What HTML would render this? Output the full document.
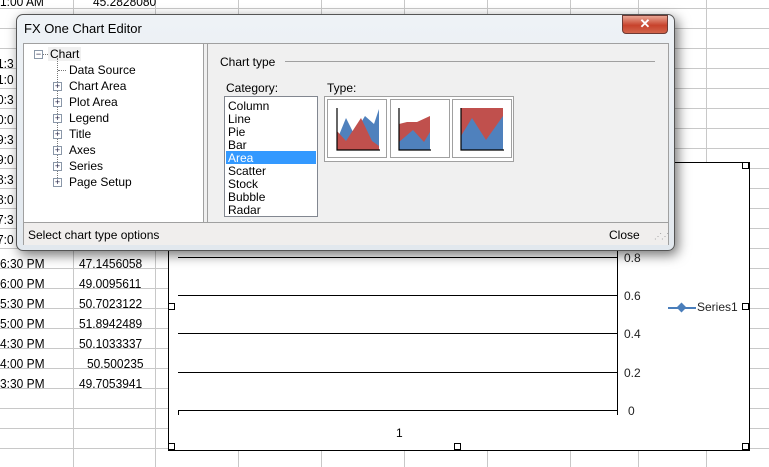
<!DOCTYPE html>
<html><head><style>
*{margin:0;padding:0;box-sizing:border-box}
body{width:769px;height:467px;overflow:hidden;background:#fff;font-family:"Liberation Sans",sans-serif;font-size:12px;color:#000;position:relative}
.a{position:absolute}
.vl{position:absolute;top:0;height:467px;width:1px;background:#c8c8c8}
.hl{position:absolute;left:0;width:769px;height:1px;background:#c8c8c8}
.cell{position:absolute;font-size:13px;white-space:nowrap;transform:scaleX(.92);transform-origin:left}
.g{position:absolute;left:178px;width:440px;height:1px;background:#000}
.yl{position:absolute;left:624px;font-size:12px;color:#222}
.h{position:absolute;width:7px;height:7px;border:1px solid #000;background:#fff}
.ti{position:absolute;font-size:12px;white-space:nowrap}
.pl{position:absolute;width:9px;height:9px;border:1px solid #8a97a8;background:#fff;font-size:9px;line-height:6px;text-align:center;color:#224}
.li{position:absolute;left:3px;font-size:12px;line-height:13px}
</style></head><body>
<div class="vl" style="left:73px"></div><div class="vl" style="left:155px"></div><div class="vl" style="left:238px"></div><div class="vl" style="left:321px"></div><div class="vl" style="left:404px"></div><div class="vl" style="left:487px"></div><div class="vl" style="left:570px"></div><div class="vl" style="left:638px"></div><div class="vl" style="left:706px"></div>
<div class="hl" style="top:8px"></div><div class="hl" style="top:28px"></div><div class="hl" style="top:48px"></div><div class="hl" style="top:68px"></div><div class="hl" style="top:88px"></div><div class="hl" style="top:108px"></div><div class="hl" style="top:128px"></div><div class="hl" style="top:148px"></div><div class="hl" style="top:168px"></div><div class="hl" style="top:188px"></div><div class="hl" style="top:208px"></div><div class="hl" style="top:228px"></div><div class="hl" style="top:248px"></div><div class="hl" style="top:268px"></div><div class="hl" style="top:288px"></div><div class="hl" style="top:308px"></div><div class="hl" style="top:328px"></div><div class="hl" style="top:348px"></div><div class="hl" style="top:368px"></div><div class="hl" style="top:388px"></div><div class="hl" style="top:408px"></div><div class="hl" style="top:428px"></div><div class="hl" style="top:448px"></div>
<div class="cell" style="left:0;top:-6px">1:00 AM</div><div class="cell" style="left:93px;top:-6px">45.2828080</div>
<div class="cell" style="left:0;top:256px">6:30 PM</div><div class="cell" style="left:79px;top:256px">47.1456058</div>
<div class="cell" style="left:0;top:276px">6:00 PM</div><div class="cell" style="left:79px;top:276px">49.0095611</div>
<div class="cell" style="left:0;top:296px">5:30 PM</div><div class="cell" style="left:79px;top:296px">50.7023122</div>
<div class="cell" style="left:0;top:316px">5:00 PM</div><div class="cell" style="left:79px;top:316px">51.8942489</div>
<div class="cell" style="left:0;top:336px">4:30 PM</div><div class="cell" style="left:79px;top:336px">50.1033337</div>
<div class="cell" style="left:0;top:356px">4:00 PM</div><div class="cell" style="left:87px;top:356px">50.500235</div>
<div class="cell" style="left:0;top:376px">3:30 PM</div><div class="cell" style="left:79px;top:376px">49.7053941</div>
<div class="cell" style="left:-3px;top:56px">1:3</div><div class="cell" style="left:-3px;top:72px">1:0</div><div class="cell" style="left:-3px;top:92px">0:3</div><div class="cell" style="left:-3px;top:112px">0:0</div><div class="cell" style="left:-3px;top:132px">9:3</div><div class="cell" style="left:-3px;top:152px">9:0</div><div class="cell" style="left:-3px;top:172px">8:3</div><div class="cell" style="left:-3px;top:192px">8:0</div><div class="cell" style="left:-3px;top:212px">7:3</div><div class="cell" style="left:-3px;top:232px">7:0</div>
<div class="a" style="left:168px;top:162px;width:582px;height:289px;background:#fff;border:1px solid #000"></div>
<div class="g" style="top:257px"></div><div class="g" style="top:295px"></div><div class="g" style="top:333px"></div><div class="g" style="top:372px"></div><div class="g" style="top:410px"></div>
<div class="a" style="left:178px;top:410px;width:1px;height:5px;background:#000"></div>
<div class="a" style="left:617px;top:250px;width:1px;height:165px;background:#000"></div>
<div class="yl" style="top:251px">0.8</div><div class="yl" style="top:289px">0.6</div><div class="yl" style="top:327px">0.4</div><div class="yl" style="top:366px">0.2</div><div class="yl" style="top:404px;left:628px">0</div>
<div class="a" style="left:396px;top:426px;font-size:12px">1</div>
<div class="a" style="left:668px;top:307px;width:28px;height:2px;background:#4a7ebb"></div>
<div class="a" style="left:678px;top:304px;width:7px;height:7px;background:#4a7ebb;transform:rotate(45deg)"></div>
<div class="a" style="left:697px;top:300px;font-size:12px;color:#222">Series1</div>
<div class="h" style="left:168px;top:303px"></div><div class="h" style="left:742px;top:303px"></div>
<div class="h" style="left:168px;top:443px"></div><div class="h" style="left:454px;top:443px"></div><div class="h" style="left:742px;top:443px"></div><div class="h" style="left:742px;top:162px"></div>
<div class="a" style="left:16px;top:14px;width:659px;height:237px;border:1px solid #555;border-radius:7px;background:linear-gradient(#eef2f6,#e2e8ee);box-shadow:3px 4px 12px rgba(0,0,0,.55)"></div>
<div class="a" style="left:24px;top:21px;font-size:13px">FX One Chart Editor</div>
<div class="a" style="left:622px;top:15px;width:46px;height:19px;border:1px solid #6d3a34;border-radius:0 0 4px 4px;background:linear-gradient(#e9a593,#c7432c 55%,#d2644b);color:#fff;font-weight:bold;text-align:center;font-size:13px;line-height:16px">✕</div>
<div class="a" style="left:23px;top:43px;width:646px;height:202px;border:1px solid #a0a0a0;background:#f0f0f0"></div>
<div class="a" style="left:24px;top:44px;width:180px;height:178px;background:#fff;border-right:1px solid #a0a0a0"></div>
<div class="a" style="left:204px;top:44px;width:4px;height:178px;background:#f0f0f0;border-right:1px solid #a0a0a0"></div>
<div class="a" style="left:24px;top:222px;width:645px;height:1px;background:#a0a0a0"></div>
<div class="a" style="left:24px;top:223px;width:644px;height:22px;background:#f0eeed"></div>
<div class="a" style="left:28px;top:228px;font-size:12px">Select chart type options</div>
<div class="a" style="left:609px;top:228px;font-size:12px">Close</div>
<div class="a" style="left:654px;top:232px;font-size:8px;color:#999;letter-spacing:-1px">⋰⋰</div>
<div class="pl" style="left:34px;top:50px">−</div>
<div class="a" style="left:43px;top:54px;width:5px;border-top:1px dotted #777"></div>
<div class="a" style="left:48px;top:47px;padding:0 2px;background:#f0f0f0;font-size:12px">Chart</div>
<div class="a" style="left:57px;top:58px;height:124px;border-left:1px dotted #777"></div>
<div class="a" style="left:58px;top:70px;width:8px;border-top:1px dotted #777"></div>
<div class="ti" style="left:69px;top:63px">Data Source</div>
<div class="pl" style="left:53px;top:82px">+</div><div class="ti" style="left:69px;top:79px">Chart Area</div>
<div class="pl" style="left:53px;top:98px">+</div><div class="ti" style="left:69px;top:95px">Plot Area</div>
<div class="pl" style="left:53px;top:114px">+</div><div class="ti" style="left:69px;top:111px">Legend</div>
<div class="pl" style="left:53px;top:130px">+</div><div class="ti" style="left:69px;top:127px">Title</div>
<div class="pl" style="left:53px;top:146px">+</div><div class="ti" style="left:69px;top:143px">Axes</div>
<div class="pl" style="left:53px;top:162px">+</div><div class="ti" style="left:69px;top:159px">Series</div>
<div class="pl" style="left:53px;top:178px">+</div><div class="ti" style="left:69px;top:175px">Page Setup</div>
<div class="a" style="left:220px;top:55px;font-size:12px">Chart type</div>
<div class="a" style="left:285px;top:61px;width:370px;height:1px;background:#a0a0a0"></div>
<div class="a" style="left:226px;top:81px;font-size:12px">Category:</div>
<div class="a" style="left:327px;top:81px;font-size:12px">Type:</div>
<div class="a" style="left:224px;top:96px;width:94px;height:121px;border:1px solid #828790;background:#fff">
<div class="li" style="top:3px">Column</div><div class="li" style="top:16px">Line</div><div class="li" style="top:29px">Pie</div><div class="li" style="top:42px">Bar</div>
<div class="a" style="left:1px;top:54px;width:90px;height:13px;background:#3399ff"></div>
<div class="li" style="top:55px;color:#fff">Area</div><div class="li" style="top:68px">Scatter</div><div class="li" style="top:81px">Stock</div><div class="li" style="top:94px">Bubble</div><div class="li" style="top:107px">Radar</div>
</div>
<div class="a" style="left:324px;top:96px;width:190px;height:66px;border:1px solid #a0a0a0;background:#fff"></div>
<svg class="a" style="left:324px;top:96px" width="190" height="66">
<g fill="#fff" stroke="#a0a0a0"><rect x="3.5" y="3.5" width="59" height="58"/><rect x="66.5" y="3.5" width="59" height="58"/><rect x="128.5" y="3.5" width="59" height="58"/></g>
<path d="M13,44 L22,22 L30,38 L41,20 L50,28 L55,13 L55,54 L13,54Z" fill="#4f81bd"/>
<path d="M13,35 L22,45 L37,22 L48,45 L55,50 L55,54 L13,54Z" fill="#c0504d"/>
<path d="M75,28 L83,26 L93,26 L106,20 L106,54 L75,54Z" fill="#c0504d"/>
<path d="M75,46 L89,34 L100,46 L106,36 L106,54 L75,54Z" fill="#4f81bd"/>
<path d="M137,12 L179,12 L179,54 L137,54Z" fill="#c0504d"/>
<path d="M137,40 L148,22 L162,44 L179,20 L179,54 L137,54Z" fill="#4f81bd"/>
<g stroke="#000" stroke-width="1.2" fill="none"><path d="M13,12 V54 H56"/><path d="M75,12 V54 H107"/><path d="M137,12 V54 H180"/></g>
</svg>
</body></html>
